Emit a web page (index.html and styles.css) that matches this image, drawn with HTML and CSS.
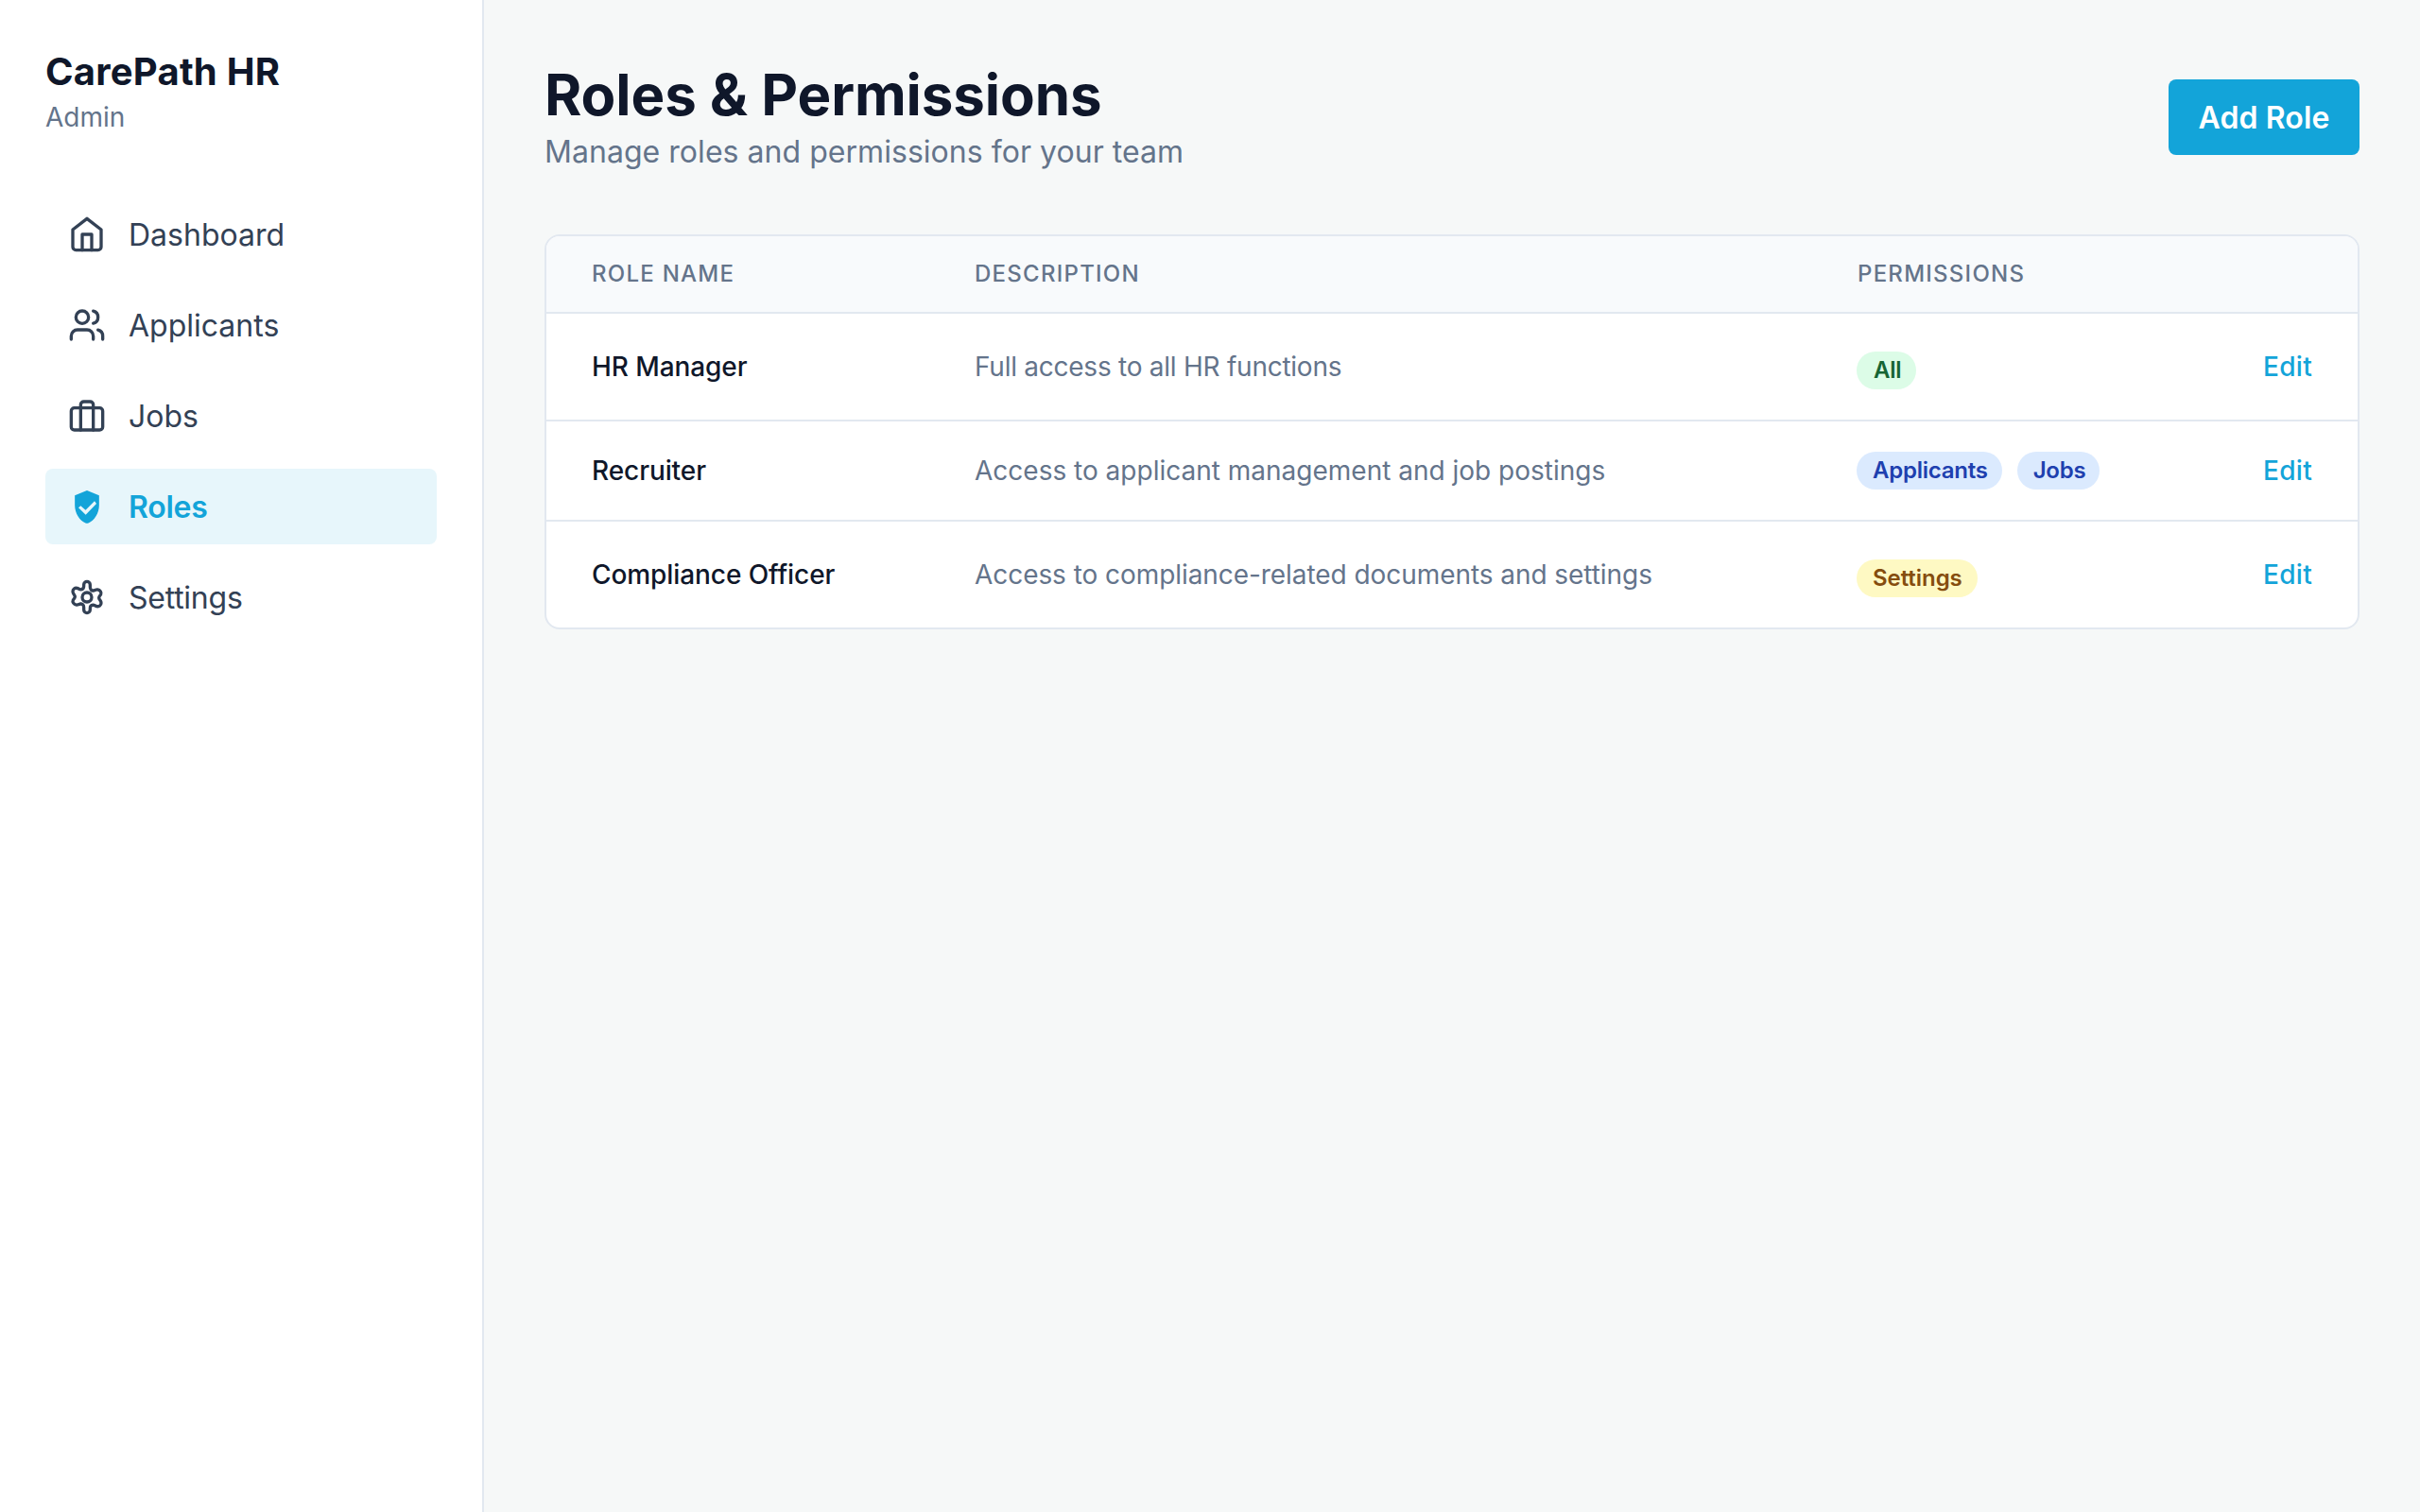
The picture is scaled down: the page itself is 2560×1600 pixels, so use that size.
FILE: index.html
```html
<!DOCTYPE html>
<html lang="en">
<head>
<meta charset="utf-8">
<title>CarePath HR - Roles &amp; Permissions</title>
<link rel="stylesheet" href="styles.css">
</head>
<body>
<div class="layout">
  <aside class="sidebar">
    <div class="brand">
      <h2 class="brand-name">CarePath HR</h2>
      <p class="brand-role">Admin</p>
    </div>
    <nav class="nav">
      <a class="nav-item">
        <svg class="icon" viewBox="0 0 24 24"><path d="m3 9 9-7 9 7v11a2 2 0 0 1-2 2H5a2 2 0 0 1-2-2z"/><path d="M9 22V12h6v10"/></svg>
        <span>Dashboard</span>
      </a>
      <a class="nav-item">
        <svg class="icon" viewBox="0 0 24 24"><path d="M16 21v-2a4 4 0 0 0-4-4H6a4 4 0 0 0-4 4v2"/><circle cx="9" cy="7" r="4"/><path d="M22 21v-2a4 4 0 0 0-3-3.87"/><path d="M16 3.13a4 4 0 0 1 0 7.75"/></svg>
        <span>Applicants</span>
      </a>
      <a class="nav-item">
        <svg class="icon" viewBox="0 0 24 24"><rect x="2" y="7" width="20" height="14" rx="2"/><path d="M16 21V5a2 2 0 0 0-2-2h-4a2 2 0 0 0-2 2v16"/></svg>
        <span>Jobs</span>
      </a>
      <a class="nav-item nav-item-active">
        <svg class="icon icon-solid" viewBox="0 0 24 24"><path fill-rule="evenodd" d="M12 1.8 19.7 4.9V11.2C19.7 16.2 16.6 20.9 12.9 22.5Q12 22.8 11.1 22.5C7.4 20.9 4.3 16.2 4.3 11.2V4.9ZM11.2 17.3 18 10.2 16.8 8.6 11.1 14.3 8 11.5 6.6 12.7Z"/></svg>
        <span class="tight">Roles</span>
      </a>
      <a class="nav-item">
        <svg class="icon" viewBox="0 0 24 24"><path d="M10 4A2 2 0 0 1 14 4V5.4C14 7 14.9 8 16 7.8C17 7.6 17.6 7 18.7 7.1C20.4 7.3 21.4 9 20.8 10.2C20.3 11.1 19.6 11.4 19.6 12.4C19.6 13.5 20.9 14 21 15.6C21 17.2 19.7 18.1 18.2 17.8C17.3 17.5 16.8 16.9 15.8 16.9C14.6 17 14 17.9 14 19V20A2 2 0 0 1 10 20V18.6C10 17 9.1 16 8 16.2C7 16.4 6.4 17 5.3 16.9C3.6 16.7 2.6 15 3.2 13.8C3.7 12.9 4.4 12.6 4.4 11.6C4.4 10.5 3.1 10 3 8.4C3 6.8 4.3 5.9 5.8 6.2C6.7 6.5 7.2 7.1 8.2 7.1C9.4 7 10 6.1 10 5Z"/><circle cx="12" cy="12" r="3"/></svg>
        <span class="tight">Settings</span>
      </a>
    </nav>
  </aside>
  <main class="main">
    <header class="page-header">
      <div>
        <h1 class="page-title">Roles &amp; Permissions</h1>
        <p class="page-subtitle">Manage roles and permissions for your team</p>
      </div>
      <button class="add-button" type="button">Add Role</button>
    </header>
    <section class="card">
      <table class="roles">
        <colgroup><col class="col-name"><col class="col-desc"><col class="col-perms"><col></colgroup>
        <thead>
          <tr><th>Role Name</th><th>Description</th><th class="th-perms">Permissions</th><th></th></tr>
        </thead>
        <tbody>
          <tr>
            <td class="name">HR Manager</td>
            <td class="tight">Full access to all HR functions</td>
            <td><div class="badges badges-single"><span class="badge badge-green">All</span></div></td>
            <td class="action"><a class="edit">Edit</a></td>
          </tr>
          <tr>
            <td class="name">Recruiter</td>
            <td>Access to applicant management and job postings</td>
            <td><div class="badges"><span class="badge badge-blue">Applicants</span><span class="badge badge-blue">Jobs</span></div></td>
            <td class="action"><a class="edit">Edit</a></td>
          </tr>
          <tr>
            <td class="name">Compliance Officer</td>
            <td class="snug">Access to compliance-related documents and settings</td>
            <td><div class="badges badges-single"><span class="badge badge-yellow">Settings</span></div></td>
            <td class="action"><a class="edit">Edit</a></td>
          </tr>
        </tbody>
      </table>
    </section>
  </main>
</div>
</body>
</html>
```
FILE: styles.css
```css
:root {
  --primary: #13a4d9;
  --ink: #0f172a;
  --text: #334155;
  --muted: #64748b;
  --line: #e2e8f0;
}

* { box-sizing: border-box; margin: 0; padding: 0; }

body {
  font-family: Inter, "Liberation Sans", sans-serif;
  font-size: 32px;
  line-height: 48px;
  color: var(--ink);
  background: #f6f8f8;
}

.layout { display: flex; min-height: 100vh; }

.sidebar {
  flex: none;
  width: 512px;
  padding: 48px;
  background: #fff;
  border-right: 2px solid var(--line);
}

.brand { margin-bottom: 64px; }
.brand-name { font-size: 40px; line-height: 56px; font-weight: 700; letter-spacing: 0.22px; }
.brand-role { font-size: 28px; line-height: 40px; color: var(--muted); }

.nav { display: flex; flex-direction: column; gap: 16px; }

.nav-item {
  display: flex;
  align-items: center;
  gap: 24px;
  height: 80px;
  padding: 0 24px;
  border-radius: 8px;
  color: var(--text);
}

.nav-item span { padding-top: 2px; }

.nav-item-active {
  color: var(--primary);
  background: #e7f6fb;
  font-weight: 600;
}

.tight { letter-spacing: -0.25px; }
.snug { letter-spacing: -0.06px; }

.icon {
  flex: none;
  width: 40px;
  height: 40px;
  fill: none;
  stroke: currentColor;
  stroke-width: 2;
  stroke-linecap: round;
  stroke-linejoin: round;
}

.icon-solid { fill: currentColor; stroke: none; }

.main { flex: 1; padding: 64px; }

.page-header {
  display: flex;
  align-items: center;
  justify-content: space-between;
  margin-bottom: 64px;
}

.page-title { font-size: 60px; line-height: 72px; font-weight: 700; letter-spacing: -0.08px; }
.page-subtitle { height: 48px; padding-top: 1px; color: var(--muted); letter-spacing: 0.04px; }

.add-button {
  width: 202px;
  height: 80px;
  padding-top: 2px;
  border: 0;
  border-radius: 8px;
  background: var(--primary);
  color: #fff;
  font: 600 32px/48px Inter, "Liberation Sans", sans-serif;
  letter-spacing: 0.1px;
}

.card {
  overflow: hidden;
  background: #fff;
  border: 2px solid var(--line);
  border-radius: 16px;
}

.roles {
  width: 100%;
  table-layout: fixed;
  border-collapse: separate;
  border-spacing: 0;
  font-size: 28px;
  line-height: 40px;
}

.col-name { width: 405px; }
.col-desc { width: 933px; }
.col-perms { width: 380px; }

.roles th {
  padding: 24px 48px;
  border-bottom: 2px solid var(--line);
  background: #f8fafc;
  color: var(--muted);
  font-size: 24px;
  line-height: 32px;
  font-weight: 500;
  letter-spacing: 1.25px;
  text-align: left;
  text-transform: uppercase;
}

.roles .th-perms { padding-left: 49px; }

.roles td {
  padding: 32px 48px;
  color: var(--muted);
  vertical-align: middle;
  white-space: nowrap;
}

.roles tbody tr:not(:last-child) td { border-bottom: 2px solid var(--line); }

.roles .name { color: var(--ink); font-weight: 500; letter-spacing: -0.08px; }
.roles .action { text-align: right; }
.edit { color: var(--primary); font-weight: 500; letter-spacing: 0.3px; }

.badges { display: flex; gap: 16px; }
.badges-single { padding-top: 8px; }

.badge {
  padding: 4px 16px 4px 17px;
  border-radius: 20px;
  font-size: 24px;
  line-height: 32px;
  font-weight: 600;
}

.badge-green { padding-left: 18px; background: #dcfce7; color: #166534; letter-spacing: -0.2px; }
.badge-blue { padding-right: 15px; background: #dbeafe; color: #1e40af; letter-spacing: -0.25px; }
.badge-yellow { background: #fef9c3; color: #854d0e; letter-spacing: -0.05px; }
```
